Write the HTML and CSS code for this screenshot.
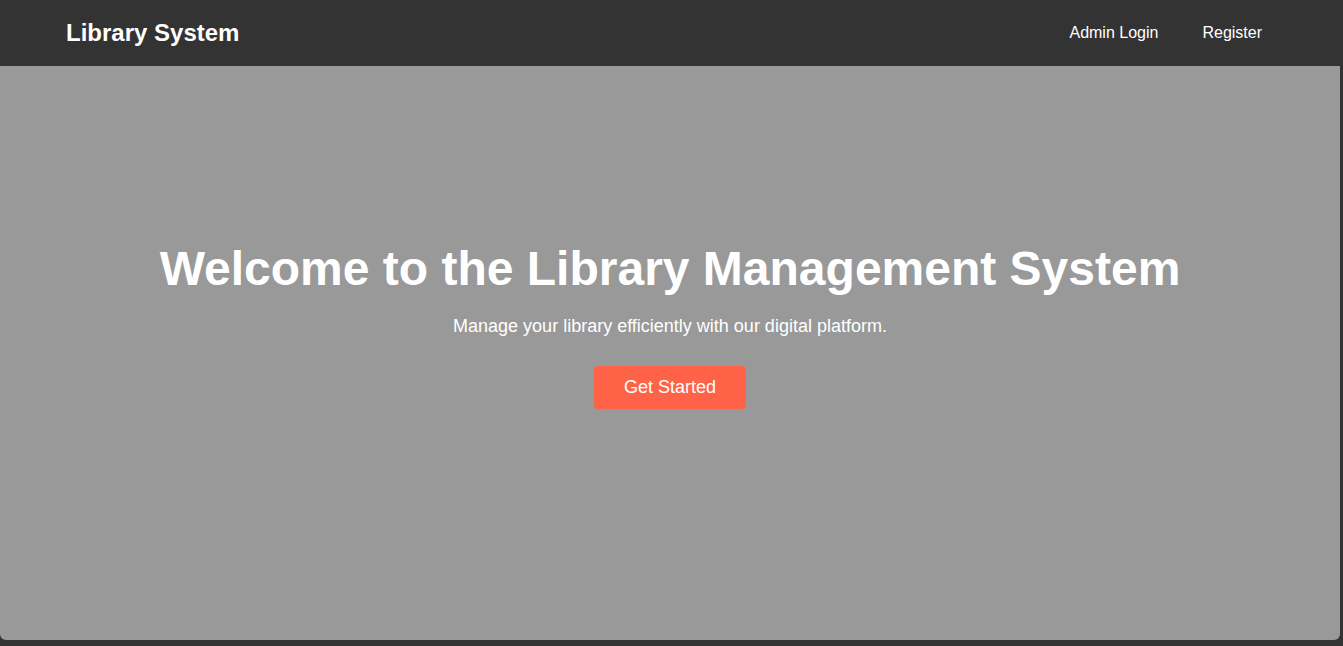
FILE: index.html
```html
<!DOCTYPE html>
<html lang="en">
<head>
<meta charset="utf-8">
<title>Library System</title>
<link rel="stylesheet" href="styles.css">
</head>
<body>
<header class="topbar">
  <div class="brand">Library System</div>
  <nav class="nav">
    <a href="#" class="nav-link">Admin Login</a>
    <a href="#" class="nav-link">Register</a>
  </nav>
</header>
<main class="hero">
  <h1 class="hero-title">Welcome to the Library Management System</h1>
  <p class="hero-text">Manage your library efficiently with our digital platform.</p>
  <a href="#" class="btn">Get Started</a>
</main>
</body>
</html>
```

FILE: styles.css
```css
html, body {
  margin: 0;
  padding: 0;
}
body {
  background: #333333;
  font-family: "Liberation Sans", Arial, sans-serif;
  color: #fff;
  height: 646px;
  overflow: hidden;
}
.topbar {
  height: 66px;
  display: flex;
  align-items: center;
  justify-content: space-between;
  padding: 0 81px 0 66px;
  background: #333333;
}
.brand {
  font-size: 24px;
  font-weight: bold;
}
.nav {
  display: flex;
  gap: 44px;
}
.nav-link {
  color: #fff;
  text-decoration: none;
  font-size: 16px;
}
.hero {
  box-sizing: border-box;
  width: 1340px;
  height: 574px;
  padding-bottom: 56px;
  background: #999999;
  border-radius: 0 0 6px 6px;
  display: flex;
  flex-direction: column;
  align-items: center;
  justify-content: center;
  text-align: center;
}
.hero-title {
  margin: 0 0 20px;
  font-size: 48px;
  font-weight: bold;
}
.hero-text {
  margin: 0 0 29px;
  font-size: 18px;
}
.btn {
  display: inline-block;
  background: #ff6347;
  color: #fff;
  text-decoration: none;
  font-size: 18px;
  padding: 11px 30px;
  border-radius: 4px;
}
```
